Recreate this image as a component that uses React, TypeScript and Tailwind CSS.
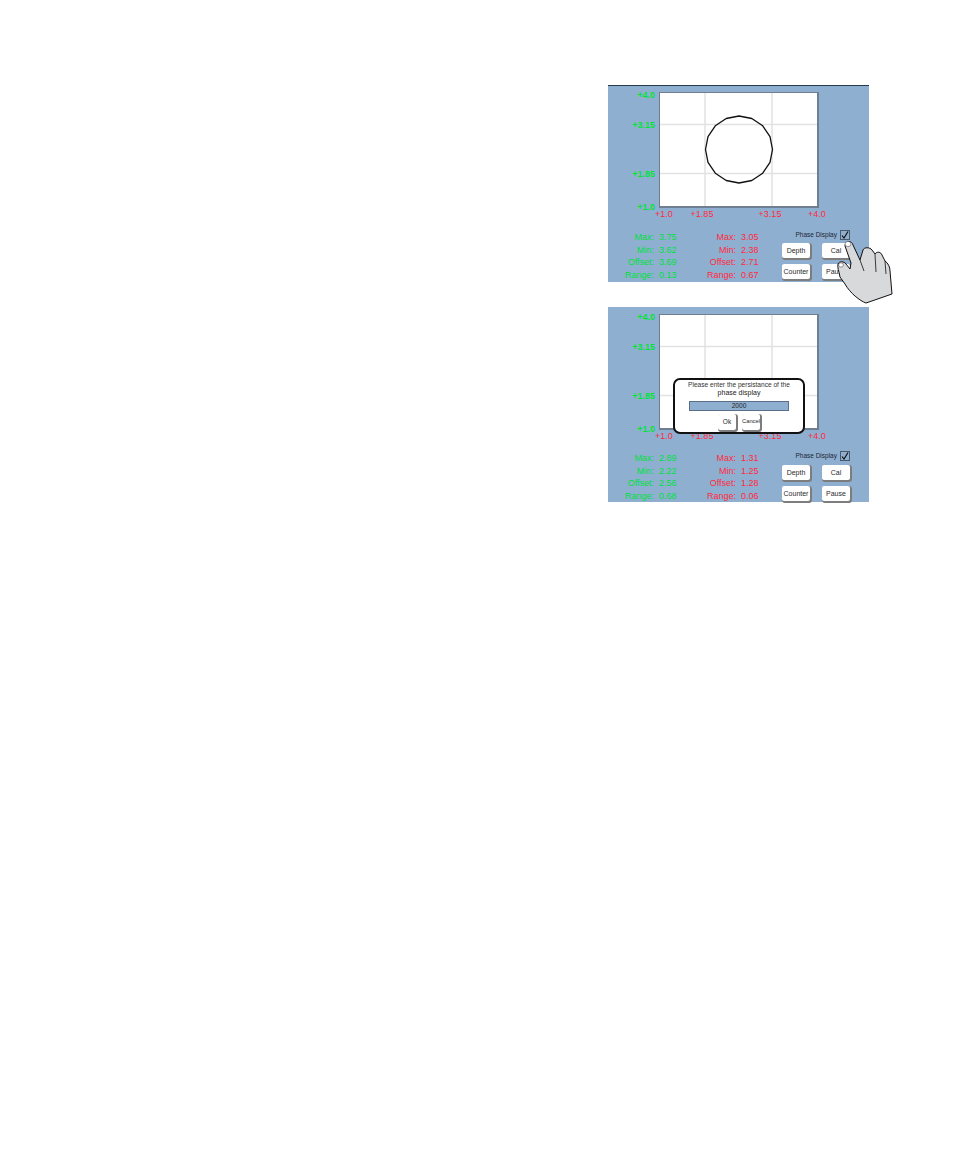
const font = "font-['Liberation_Sans',Arial,sans-serif]";

type Stat = [string, string];

function Plot({ circle }: { circle: boolean }) {
  return (
    <div className="relative w-[160px] h-[116px] bg-white border border-[#6f7f90] border-b-2 border-r-2">
      <svg className="absolute inset-0 w-full h-full" viewBox="0 0 157 113" preserveAspectRatio="none">
        <path d="M45 0V113M112 0V113M0 31.5H157M0 80.5H157" stroke="#e2e2e2" strokeWidth="1.5" fill="none" />
        {circle && (
          <path
            d="M112.5 56.5L110 69.3L102.7 80.2L91.8 87.5L79 90L66.2 87.5L55.3 80.2L48 69.3L45.5 56.5L48 43.7L55.3 32.8L66.2 25.5L79 23L91.8 25.5L102.7 32.8L110 43.7Z"
            stroke="#111"
            strokeWidth="1.3"
            strokeLinejoin="round"
            fill="none"
          />
        )}
      </svg>
      <YLabel cls="top-[2px]" text="+4.0" />
      <YLabel cls="top-[32px]" text="+3.15" />
      <YLabel cls="top-[81px]" text="+1.85" />
      <YLabel cls="top-[114px]" text="+1.0" />
      <XLabel cls="left-[4px]" text="+1.0" />
      <XLabel cls="left-[42px]" text="+1.85" />
      <XLabel cls="left-[110px]" text="+3.15" />
      <XLabel cls="left-[157px]" text="+4.0" />
    </div>
  );
}

function YLabel({ cls, text }: { cls: string; text: string }) {
  return (
    <span className={`absolute ${cls} right-[162px] -translate-y-1/2 text-[9px] leading-none font-bold text-[#00e436] whitespace-nowrap`}>
      {text}
    </span>
  );
}

function XLabel({ cls, text }: { cls: string; text: string }) {
  return (
    <span className={`absolute ${cls} top-[117px] -translate-x-1/2 text-[9px] leading-none text-[#ff2a3c] whitespace-nowrap`}>
      {text}
    </span>
  );
}

function StatColumn({ stats, labelWidth, color }: { stats: Stat[]; labelWidth: string; color: string }) {
  return (
    <div className={`flex flex-col ${color}`}>
      {stats.map(([label, value]) => (
        <div key={label} className="flex h-[12.8px] items-center text-[9px] leading-none">
          <span className={`${labelWidth} text-right`}>{label}</span>
          <span className="ml-[5px] w-[27px]">{value}</span>
        </div>
      ))}
    </div>
  );
}

function Btn({ label, cls }: { label: string; cls: string }) {
  return (
    <div className={`${cls} flex items-center justify-center bg-white rounded-[2px] shadow-[1px_1px_0_1px_#7d7d7d] leading-none text-[#2a2a2a]`}>
      {label}
    </div>
  );
}

function Controls({ spaced }: { spaced: boolean }) {
  return (
    <div className="ml-[14px] w-[68px] -mt-[1px] flex flex-col">
      <div className="flex items-center justify-end h-[10px]">
        <span className="text-[6.5px] leading-none text-[#1c2733] mr-[3px] whitespace-nowrap">Phase Display</span>
        <div className="w-[10px] h-[10px] border border-[#4a5a6a] flex items-center justify-center">
          <svg width="8" height="8" viewBox="0 0 8 8">
            <path d="M1 4.5L3 7L7 0.5" stroke="#111" strokeWidth="1.2" fill="none" />
          </svg>
        </div>
      </div>
      <div className={`${spaced ? "mt-[4px]" : "mt-[3px]"} grid grid-cols-[28px_28px] justify-between gap-y-[6px]`}>
        <Btn label="Depth" cls="h-[15px] text-[7px]" />
        <Btn label="Cal" cls="h-[15px] text-[7px]" />
        <Btn label="Counter" cls="h-[15px] text-[7px]" />
        <Btn label="Pause" cls="h-[15px] text-[7px]" />
      </div>
    </div>
  );
}

function Hand() {
  return (
    <svg className="absolute left-[227px] top-[145px] z-10" width="60" height="75" viewBox="835 230 60 75">
      <path
        d="M845 245 C845 240 852 239 853 244 L860 259 L863 249 C864 246 870 246 872 249 L875 253 C877 250 881 251 882 254 L885 260 C888 262 890 266 890 270 L892 293 L866 302 C860 300 850 292 845 283 L840 276 C839 270 837 266 838 263 C839 260 844 260 846 263 L850 268 L851 262 Z"
        fill="#d8d9da"
        stroke="#111"
        strokeWidth="1"
        strokeLinejoin="round"
      />
      <path d="M860 259L864 270M875 253L876 271M885 260L886 273" stroke="#111" strokeWidth="0.8" fill="none" />
      <ellipse cx="848" cy="243" rx="3" ry="2.6" fill="#fff" stroke="#333" strokeWidth="0.5" />
      <ellipse cx="841" cy="264" rx="2.4" ry="2.2" fill="#fff" stroke="#333" strokeWidth="0.5" />
    </svg>
  );
}

function Dialog() {
  return (
    <div className="absolute left-[65px] top-[71px] z-10 w-[132px] h-[56px] bg-white border-2 border-[#111] rounded-[7px] flex flex-col items-center pt-[1px]">
      <p className="text-[6.6px] leading-[8px] text-[#333] whitespace-nowrap">Please enter the persistance of the</p>
      <p className="text-[7px] leading-[8px] text-[#222] whitespace-nowrap">phase display</p>
      <div className="mt-[4px] w-[100px] h-[10px] bg-[#8fafd1] border border-[#5b7088] flex items-center justify-center text-[6.6px] leading-none text-[#222]">
        2000
      </div>
      <div className="mt-[3px] flex gap-[6px]">
        <Btn label="Ok" cls="w-[18px] h-[16px] text-[6.5px]" />
        <Btn label="Cancel" cls="w-[18px] h-[16px] text-[5.8px] whitespace-nowrap" />
      </div>
    </div>
  );
}

function Panel({ tall, green, red }: { tall: boolean; green: Stat[]; red: Stat[] }) {
  return (
    <div className={`relative w-[261px] ${tall ? "h-[197px] border-t border-[#27394d] pt-[6px]" : "h-[195px] pt-[7px]"} bg-[#8fafd1]`}>
      <div className="pl-[51px]">
        <Plot circle={tall} />
      </div>
      <div className={`${tall ? "mt-[23px]" : "mt-[22px]"} flex`}>
        <StatColumn stats={green} labelWidth="w-[46px]" color="text-[#00e03c]" />
        <StatColumn stats={red} labelWidth="w-[50px]" color="text-[#ff2a3c]" />
        <Controls spaced={!tall} />
      </div>
      {tall ? <Hand /> : <Dialog />}
    </div>
  );
}

export default function App() {
  return (
    <div className={`${font} min-h-[1158px] bg-white pl-[608px] pt-[85px] flex flex-col gap-[25px]`}>
      <Panel
        tall
        green={[["Max:", "3.75"], ["Min:", "3.62"], ["Offset:", "3.69"], ["Range:", "0.13"]]}
        red={[["Max:", "3.05"], ["Min:", "2.38"], ["Offset:", "2.71"], ["Range:", "0.67"]]}
      />
      <Panel
        tall={false}
        green={[["Max:", "2.89"], ["Min:", "2.22"], ["Offset:", "2.56"], ["Range:", "0.68"]]}
        red={[["Max:", "1.31"], ["Min:", "1.25"], ["Offset:", "1.28"], ["Range:", "0.06"]]}
      />
    </div>
  );
}
